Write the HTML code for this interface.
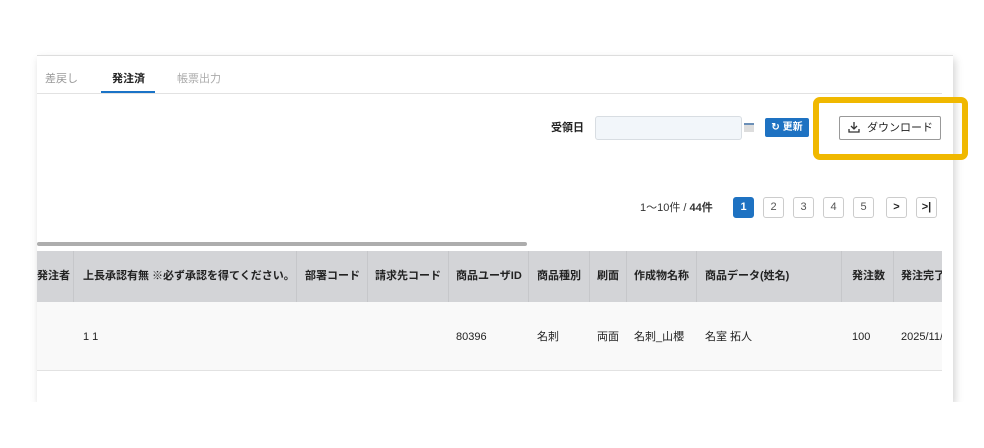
<!DOCTYPE html>
<html><head><meta charset="utf-8"><style>
*{margin:0;padding:0;box-sizing:border-box}
body{width:984px;height:448px;background:#fff;position:relative;overflow:hidden;font-family:"Liberation Sans","Noto Sans CJK JP",sans-serif;color:#222}
.abs{position:absolute}
.panel{left:37px;top:55px;width:916px;height:347px;background:#fff;box-shadow:2px 4px 8px rgba(0,0,0,.18);border-top:1px solid #ddd;overflow:hidden}
.t{font-size:11px;white-space:nowrap;line-height:14px}
.pg{position:absolute;top:197px;width:21px;height:21px;border:1px solid #ccc;border-radius:3px;font-size:11px;text-align:center;line-height:19px;color:#555;background:#fff}
.th{font-size:11px;font-weight:bold;top:269px;line-height:14px;white-space:nowrap}
.td{font-size:11px;top:330px;line-height:14px;height:14px;white-space:nowrap}
.vl{top:251px;width:1px;height:51px;background:#c6c7ca}
</style></head><body>
<div class="abs panel"></div>
<div class="abs" style="left:37px;top:93px;width:905px;height:1px;background:#e2e2e2"></div>
<div class="abs t" style="left:45px;top:72px;color:#999">差戻し</div>
<div class="abs t" style="left:112px;top:72px;font-weight:bold">発注済</div>
<div class="abs t" style="left:177px;top:72px;color:#aaa">帳票出力</div>
<div class="abs" style="left:101px;top:91px;width:54px;height:2px;background:#1a73c7"></div>

<div class="abs t" style="left:551px;top:121px;font-weight:bold">受領日</div>
<div class="abs" style="left:595px;top:116px;width:147px;height:24px;background:#f2f6fa;border:1px solid #d8dde2;border-radius:3px"></div>
<div class="abs" style="left:744px;top:123px;width:10px;height:9px;background:#ddd;border-top:2px solid #6b8fb7"></div>
<div class="abs" style="left:765px;top:118px;width:44px;height:19px;background:#1e72c2;border-radius:2px;color:#fff;font-size:10px;font-weight:bold;line-height:19px;text-align:center">↻ 更新</div>
<div class="abs" style="left:813px;top:97px;width:155px;height:63px;border:6px solid #f0b800;border-radius:7px"></div>
<div class="abs" style="left:839px;top:116px;width:102px;height:24px;border:1px solid #999;border-radius:2px;background:#fff;font-size:11px;line-height:22px;padding-left:27px">ダウンロード</div>
<svg class="abs" style="left:848px;top:121px" width="12" height="12" viewBox="0 0 12 12" fill="none" stroke="#333" stroke-width="1.3"><path d="M6 1v7M3 5l3 3 3-3M1 8v3h10V8"/></svg>

<div class="abs t" style="left:640px;top:201px;color:#333">1〜10件 / <b>44件</b></div>
<div class="pg" style="left:733px;background:#1e72c2;border-color:#1e72c2;color:#fff;font-weight:bold">1</div>
<div class="pg" style="left:763px">2</div>
<div class="pg" style="left:793px">3</div>
<div class="pg" style="left:823px">4</div>
<div class="pg" style="left:853px">5</div>
<div class="pg" style="left:886px;color:#222;font-weight:bold">&gt;</div>
<div class="pg" style="left:916px;color:#222;font-weight:bold">&gt;|</div>

<div class="abs" style="left:37px;top:242px;width:490px;height:4px;background:#adadad;border-radius:2px"></div>
<div class="abs" style="left:37px;top:251px;width:905px;height:51px;background:#d3d4d7"></div>
<div class="abs" style="left:37px;top:302px;width:905px;height:69px;background:#f9f9f9;border-bottom:1px solid #e2e2e2"></div>
<div class="abs vl" style="left:73px"></div><div class="abs vl" style="left:296px"></div><div class="abs vl" style="left:367px"></div><div class="abs vl" style="left:448px"></div><div class="abs vl" style="left:528px"></div><div class="abs vl" style="left:589px"></div><div class="abs vl" style="left:626px"></div><div class="abs vl" style="left:696px"></div><div class="abs vl" style="left:841px"></div><div class="abs vl" style="left:893px"></div>
<div class="abs th" style="left:37px">発注者</div>
<div class="abs th" style="left:83px">上長承認有無 ※必ず承認を得てください。</div>
<div class="abs th" style="left:305px">部署コード</div>
<div class="abs th" style="left:375px">請求先コード</div>
<div class="abs th" style="left:456px">商品ユーザID</div>
<div class="abs th" style="left:537px">商品種別</div>
<div class="abs th" style="left:597px">刷面</div>
<div class="abs th" style="left:634px">作成物名称</div>
<div class="abs th" style="left:705px">商品データ(姓名)</div>
<div class="abs th" style="left:852px">発注数</div>
<div class="abs th" style="left:901px;width:41px;overflow:hidden">発注完了</div>
<div class="abs td" style="left:83px">1 1</div>
<div class="abs td" style="left:456px">80396</div>
<div class="abs td" style="left:537px">名刺</div>
<div class="abs td" style="left:597px">両面</div>
<div class="abs td" style="left:634px">名刺_山櫻</div>
<div class="abs td" style="left:705px">名室 拓人</div>
<div class="abs td" style="left:852px">100</div>
<div class="abs td" style="left:901px;width:41px;overflow:hidden">2025/11/</div>
<div class="abs" style="left:0;top:402px;width:984px;height:46px;background:#fff"></div>
</body></html>
